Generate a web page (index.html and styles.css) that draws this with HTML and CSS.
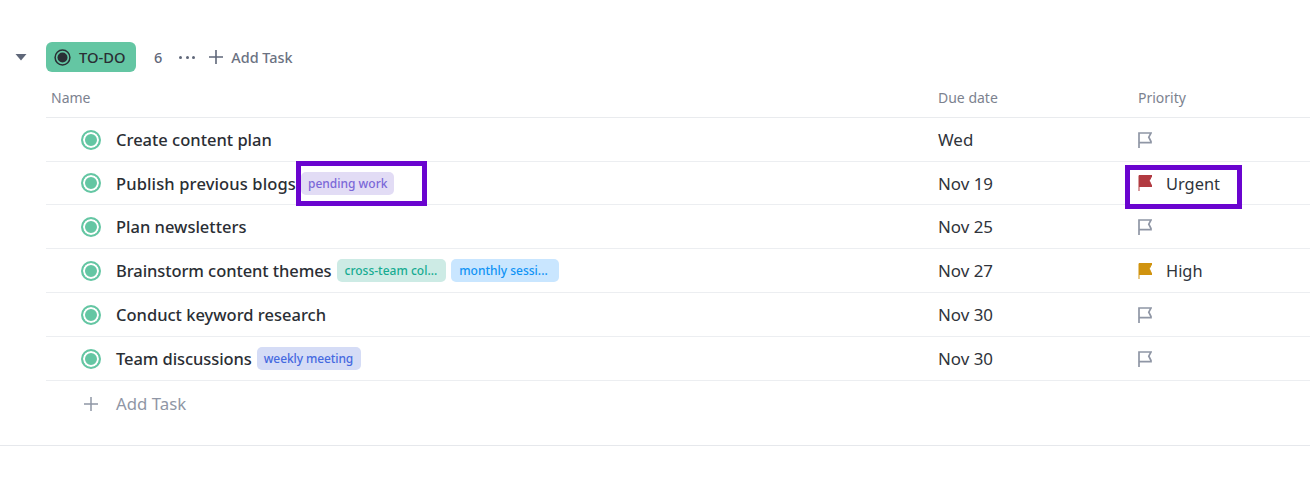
FILE: index.html
```html
<!DOCTYPE html>
<html lang="en">
<head>
<meta charset="utf-8">
<title>To-do list</title>
<link rel="stylesheet" href="styles.css">
</head>
<body>
<section class="group">
  <header class="group-head">
    <svg class="caret" width="12" height="8" viewBox="0 0 12 8"><path d="M0.5 1h11L6 7.5z" fill="#5f6779"/></svg>
    <span class="badge">
      <svg class="badge-icon" width="17" height="17" viewBox="0 0 17 17"><circle cx="8.5" cy="8.5" r="7.4" fill="none" stroke="#2a2e34" stroke-width="1.5"/><circle cx="8.5" cy="8.5" r="5" fill="#2a2e34"/></svg>
      TO-DO
    </span>
    <span class="count">6</span>
    <span class="dots"><i></i><i></i><i></i></span>
    <span class="add-head">
      <svg width="14" height="14" viewBox="0 0 14 14"><path d="M7 0v14M0 7h14" stroke="#5f6779" stroke-width="1.6" fill="none"/></svg>
      Add Task
    </span>
  </header>

  <div class="columns row-grid">
    <span class="col-name">Name</span>
    <span>Due date</span>
    <span>Priority</span>
  </div>

  <div class="task row-grid">
    <div class="name"><span class="status"></span><span class="title">Create content plan</span></div>
    <span class="date">Wed</span>
    <div class="prio"><svg class="flag" width="14" height="16" viewBox="0 0 14 16"><path d="M1 16V1h12l-2.2 4.2L13 9.5v1.2H1" fill="none" stroke="#8f96a5" stroke-width="1.7"/></svg></div>
  </div>

  <div class="task task-short row-grid">
    <div class="name"><span class="status"></span><span class="title title-wide">Publish previous blogs</span><span class="tag tag-purple">pending work</span><span class="mark mark-tag"></span></div>
    <span class="date">Nov 19</span>
    <div class="prio"><svg class="flag" width="14" height="16" viewBox="0 0 14 16"><path d="M1 16V0.5h13l-2.7 5.2L14 11.5H1" fill="#b13a41" stroke="#b13a41" stroke-width="1"/></svg><span class="prio-label">Urgent</span><span class="mark mark-prio"></span></div>
  </div>

  <div class="task row-grid">
    <div class="name"><span class="status"></span><span class="title">Plan newsletters</span></div>
    <span class="date">Nov 25</span>
    <div class="prio"><svg class="flag" width="14" height="16" viewBox="0 0 14 16"><path d="M1 16V1h12l-2.2 4.2L13 9.5v1.2H1" fill="none" stroke="#8f96a5" stroke-width="1.7"/></svg></div>
  </div>

  <div class="task row-grid">
    <div class="name"><span class="status"></span><span class="title title-narrow">Brainstorm content themes</span><span class="tag tag-teal">cross-team col...</span><span class="tag tag-blue">monthly sessi...</span></div>
    <span class="date">Nov 27</span>
    <div class="prio"><svg class="flag" width="14" height="16" viewBox="0 0 14 16"><path d="M1 16V0.5h13l-2.7 5.2L14 11.5H1" fill="#d0930f" stroke="#d0930f" stroke-width="1"/></svg><span class="prio-label">High</span></div>
  </div>

  <div class="task row-grid">
    <div class="name"><span class="status"></span><span class="title">Conduct keyword research</span></div>
    <span class="date">Nov 30</span>
    <div class="prio"><svg class="flag" width="14" height="16" viewBox="0 0 14 16"><path d="M1 16V1h12l-2.2 4.2L13 9.5v1.2H1" fill="none" stroke="#8f96a5" stroke-width="1.7"/></svg></div>
  </div>

  <div class="task row-grid">
    <div class="name"><span class="status"></span><span class="title title-narrow">Team discussions</span><span class="tag tag-indigo">weekly meeting</span></div>
    <span class="date">Nov 30</span>
    <div class="prio"><svg class="flag" width="14" height="16" viewBox="0 0 14 16"><path d="M1 16V1h12l-2.2 4.2L13 9.5v1.2H1" fill="none" stroke="#8f96a5" stroke-width="1.7"/></svg></div>
  </div>

  <div class="add-row">
    <svg width="14" height="14" viewBox="0 0 14 14"><path d="M7 0v14M0 7h14" stroke="#8f96a5" stroke-width="1.5" fill="none"/></svg>
    <span>Add Task</span>
  </div>
</section>
</body>
</html>
```
FILE: styles.css
```css
* { box-sizing: border-box; }
html, body { margin: 0; padding: 0; }
body {
  background: #fff;
  font-family: "Noto Sans", sans-serif;
  color: #2a2e34;
  overflow: hidden;
}
.group {
  margin-top: 42px;
  height: 404px;
  border-bottom: 1px solid #e6e8ec;
}
.group-head {
  display: flex;
  align-items: center;
  height: 30px;
  padding-left: 15px;
}
.caret { margin-right: 19px; }
.badge {
  display: flex;
  align-items: center;
  gap: 8px;
  width: 90px;
  height: 30px;
  padding-left: 8px;
  background: #64c6a3;
  border-radius: 6px;
  font-size: 14.7px;
  font-weight: 500;
  color: #2a2e34;
}
.count {
  margin-left: 18px;
  font-size: 14.5px;
  font-weight: 500;
  color: #5f6779;
}
.dots {
  display: flex;
  gap: 3.5px;
  margin-left: 17px;
}
.dots i {
  width: 3px;
  height: 3px;
  border-radius: 50%;
  background: #5f6779;
}
.add-head {
  display: flex;
  align-items: center;
  gap: 8px;
  margin-left: 14px;
  font-size: 14.4px;
  font-weight: 500;
  color: #6b7282;
}
.row-grid {
  display: grid;
  grid-template-columns: 892px 200px 1fr;
  align-items: center;
  margin-left: 46px;
}
.columns {
  height: 46px;
  padding-top: 5px;
  font-size: 14px;
  color: #7c828f;
  border-bottom: 1px solid #e9ebee;
}
.col-name { padding-left: 5px; }
.task {
  height: 44px;
  border-bottom: 1px solid #eceef1;
  font-size: 16.9px;
}
.task-short { height: 43px; }
.name {
  position: relative;
  display: flex;
  align-items: center;
  height: 100%;
  padding-left: 35px;
}
.status {
  flex: none;
  width: 20px;
  height: 20px;
  margin-right: 15px;
  border-radius: 50%;
  border: 2px solid #64c6a3;
  background: #64c6a3;
  box-shadow: inset 0 0 0 2px #fff;
}
.title { font-size: 16.5px; font-weight: 500; white-space: nowrap; }
.title-wide { letter-spacing: 0.13px; }
.title-narrow { letter-spacing: -0.08px; }
.date { color: #2f343b; }
.tag {
  flex: none;
  height: 23px;
  margin-left: 5px;
  padding: 0 7px;
  border-radius: 5px;
  font-size: 12px;
  font-weight: 500;
  line-height: 23px;
  white-space: nowrap;
}
.tag-purple { background: #e2dcf5; color: #7b68d8; }
.tag-teal { padding: 0 9px 0 8px; background: #cdebe5; color: #17ab92; }
.tag-blue { padding: 0 11px 0 8px; background: #c9e6ff; color: #0f93f5; }
.tag-indigo { padding: 0 8px 0 7px; letter-spacing: -0.1px; background: #d5dcf6; color: #4569e0; }
.prio {
  position: relative;
  display: flex;
  align-items: center;
  height: 100%;
}
.flag { flex: none; }
.prio-label { margin-left: 14px; font-size: 16.4px; color: #2f343b; }
.mark {
  position: absolute;
  border: 5px solid #6a04cf;
  pointer-events: none;
}
.mark-tag { left: 250px; top: -1px; width: 131px; height: 45px; }
.mark-prio { left: -13px; top: 3px; width: 117px; height: 44px; }
.add-row {
  display: flex;
  align-items: center;
  gap: 18px;
  height: 45px;
  margin-left: 84px;
  font-size: 16.8px;
  color: #8f96a5;
}
```
